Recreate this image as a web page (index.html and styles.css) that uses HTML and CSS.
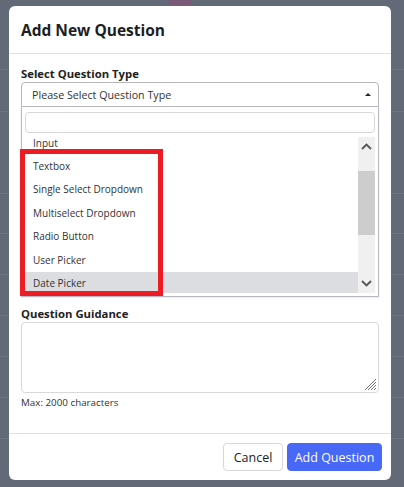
FILE: index.html
```html
<!DOCTYPE html>
<html lang="en">
  <head>
    <meta charset="UTF-8" />
    <meta name="viewport" content="width=device-width, initial-scale=1.0" />
    <title>Add New Question</title>
    <link rel="stylesheet" href="styles.css">
  </head>
  <body>
    <!-- page behind the overlay -->
    <div class="page">
      <div class="page-top"><span class="logo-blob"></span></div>
      <div class="page-rows">
        <div class="page-row r1"></div>
        <div class="page-row r2"></div>
        <div class="page-row r3"></div>
        <div class="page-row r4"></div>
        <div class="page-row r4"></div>
        <div class="page-row r4"></div>
        <div class="page-row r4"></div>
        <div class="page-row r4"></div>
      </div>
    </div>

    <div class="overlay">
      <div class="modal">
        <div class="modal-header">
          <h2>Add New Question</h2>
        </div>

        <div class="modal-body">
          <label class="field-label">Select Question Type</label>
          <div class="select">
            <div class="select-value">
              <span>Please Select Question Type</span>
              <span class="caret"></span>
            </div>
            <div class="select-panel">
              <div class="select-search"></div>
              <div class="select-list">
                <ul class="options">
                  <li class="first">Input</li>
                  <li>Textbox</li>
                  <li>Single Select Dropdown</li>
                  <li>Multiselect Dropdown</li>
                  <li>Radio Button</li>
                  <li>User Picker</li>
                  <li class="hover">Date Picker</li>
                </ul>
                <div class="scrollbar">
                  <span class="sb-btn">
                    <svg width="11" height="7" viewBox="0 0 11 7"><path d="M1 6 L5.5 1.5 L10 6" fill="none" stroke="#555" stroke-width="1.8"/></svg>
                  </span>
                  <div class="sb-track"><span class="sb-thumb"></span></div>
                  <span class="sb-btn">
                    <svg width="11" height="7" viewBox="0 0 11 7"><path d="M1 1 L5.5 5.5 L10 1" fill="none" stroke="#555" stroke-width="1.8"/></svg>
                  </span>
                </div>
              </div>
            </div>
            <div class="mark-box"></div>
          </div>

          <label class="field-label guidance-label">Question Guidance</label>
          <div class="textarea">
            <svg class="resize" width="13" height="13" viewBox="0 0 13 13">
              <path d="M12 1 L1 12 M12 4 L4 12 M12 7 L7 12 M12 10 L10 12" stroke="#6f6f6f" stroke-width="1"/>
            </svg>
          </div>
          <p class="hint">Max: 2000 characters</p>
        </div>

        <div class="modal-footer">
          <button class="btn btn-light">Cancel</button>
          <button class="btn btn-primary">Add Question</button>
        </div>
      </div>
    </div>
  </body>
</html>
```

FILE: styles.css
```css
body {
  font-family: 'Open Sans', 'Liberation Sans', sans-serif;
  margin: 0;
  padding: 0;
  background: #636a77;
  color: #222;
  height: 487px;
  overflow: hidden;
}
.page {
  height: 487px;
}
.page-top {
  height: 73px;
  border-bottom: 1px solid #6d7380;
}
.logo-blob {
  display: block;
  width: 24px;
  height: 12px;
  margin: -4px 0 0 168px;
  border-radius: 50%;
  background: #7b5a78;
}
.page-row {
  border-bottom: 1px solid #6d7380;
}
.r1 { height: 41px; }
.r2 { height: 81px; }
.r3 { height: 39px; }
.r4 { height: 40px; }

.overlay {
  position: absolute;
  top: 0;
  left: 0;
  right: 0;
  bottom: 0;
}
.modal {
  position: absolute;
  top: 6px;
  left: 9px;
  width: 382px;
  height: 474px;
  background: #fff;
  border-radius: 6px;
  display: flex;
  flex-direction: column;
}
.modal-header {
  height: 47px;
  padding: 0 12px;
  display: flex;
  align-items: center;
  border-bottom: 1px solid #dfe0e4;
}
.modal-header h2 {
  margin: 0;
  font-size: 15.5px;
  font-weight: 700;
  color: #1d1e22;
}
.modal-body {
  flex: 1;
  padding: 12px 12px 0;
}
.field-label {
  display: block;
  font-size: 11.3px;
  line-height: 16px;
  font-weight: 700;
  color: #222;
}
.guidance-label {
  margin-top: 9px;
}
.select {
  position: relative;
}
.select-value {
  height: 23px;
  border: 1px solid #b5b8bf;
  border-radius: 4px 4px 0 0;
  display: flex;
  align-items: center;
  justify-content: space-between;
  padding: 0 7px 0 10px;
  font-size: 10.7px;
  color: #333;
}
.caret {
  width: 0;
  height: 0;
  border-left: 3px solid transparent;
  border-right: 3px solid transparent;
  border-bottom: 3px solid #222;
}
.select-panel {
  border: 1px solid #b5b8bf;
  border-top: none;
  padding: 5px 3px 3px;
  box-shadow: 0 1px 2px rgba(0, 0, 0, 0.08);
}
.select-search {
  height: 19px;
  border: 1px solid #d6d8dc;
  border-radius: 4px;
}
.select-list {
  margin-top: 4px;
  height: 156px;
  display: flex;
  overflow: hidden;
}
.options {
  list-style: none;
  margin: 0;
  padding: 0;
  flex: 1;
}
.options li {
  height: 23.6px;
  line-height: 23.6px;
  padding-left: 8px;
  font-size: 10px;
  color: #333;
}
.options li.first {
  height: 17.5px;
  line-height: 12px;
}
.options li.hover {
  background: #dcdde1;
}
.scrollbar {
  width: 17px;
  background: #f0f0f0;
  display: flex;
  flex-direction: column;
}
.sb-btn {
  height: 19px;
  display: flex;
  align-items: center;
  justify-content: center;
}
.sb-track {
  flex: 1;
  padding-top: 15px;
}
.sb-thumb {
  display: block;
  height: 64px;
  background: #cdcdcd;
}
.mark-box {
  position: absolute;
  left: -1px;
  top: 67px;
  width: 133px;
  height: 137px;
  border: 5px solid #ec1c24;
}
.textarea {
  height: 69px;
  border: 1px solid #d6d8dc;
  border-radius: 4px;
  position: relative;
}
.resize {
  position: absolute;
  right: 1px;
  bottom: 1px;
}
.hint {
  margin: 4px 0 0;
  font-size: 9.8px;
  line-height: 12px;
  color: #333;
}
.modal-footer {
  height: 46px;
  border-top: 1px solid #dfe0e4;
  display: flex;
  align-items: center;
  justify-content: flex-end;
  gap: 4px;
  padding: 0 9px;
}
.btn {
  height: 28px;
  border-radius: 4px;
  font-family: inherit;
  font-size: 12.5px;
  padding: 0;
  white-space: nowrap;
  cursor: pointer;
}
.btn-light {
  width: 60px;
  background: #fff;
  border: 1px solid #d6d8dc;
  color: #222;
}
.btn-primary {
  width: 95px;
  background: #4868f7;
  border: 1px solid #4868f7;
  color: #fff;
}
```
